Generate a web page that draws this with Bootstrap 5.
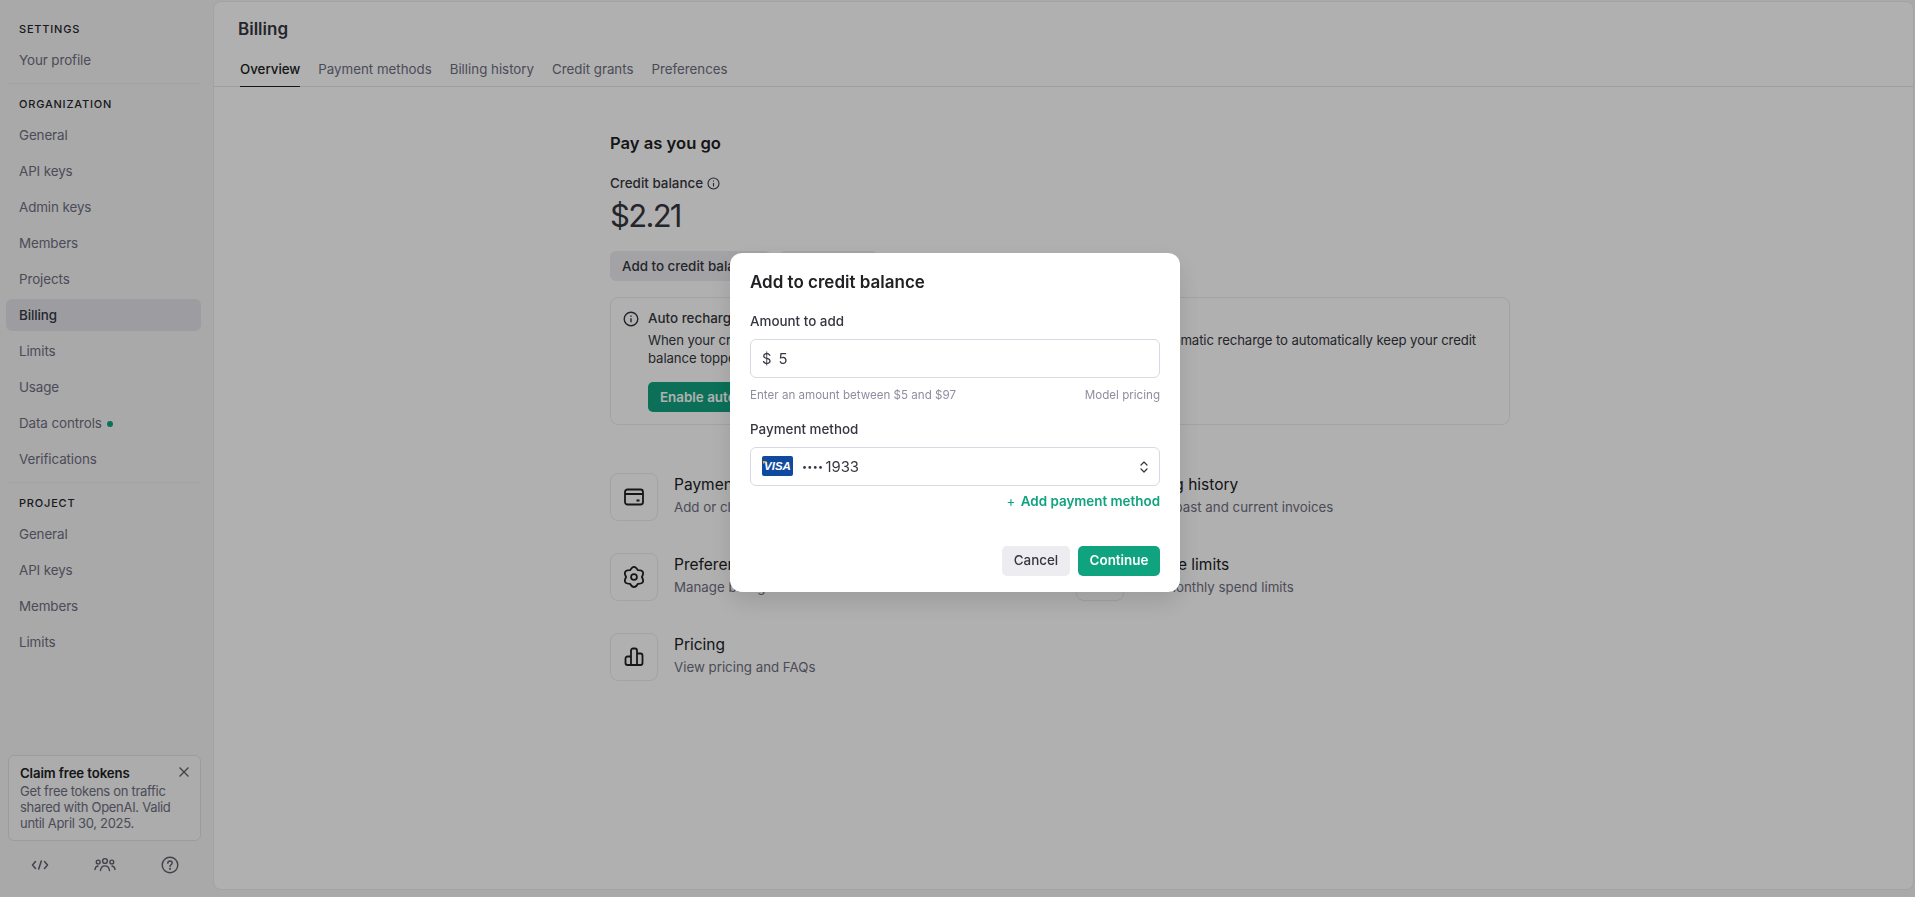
<!DOCTYPE html>
<html lang="en">

<head>
    <meta charset="UTF-8">
    <meta name="viewport" content="width=device-width, initial-scale=1.0">
    <title>Billing</title>
    <link href="https://cdn.jsdelivr.net/npm/bootstrap@5.3.3/dist/css/bootstrap.min.css" rel="stylesheet">
    <style>
        html, body { height: 100%; }

        body {
            background: #f5f5f5;
            font-family: Inter, "Liberation Sans", sans-serif;
            font-size: 14px;
            color: #202123;
            overflow: hidden;
        }

        /* sidebar */
        .side-col { width: 213px; height: 897px; padding: 0 12px 0 6px; flex-shrink: 0; }
        .side-head { font-size: 11px; font-weight: 500; letter-spacing: .8px; color: #26262b; padding-left: 13px; height: 16px; line-height: 16px; }
        .side-head.first { margin-top: 21px; }
        .side-list { margin-top: 5px; }
        .side-link { height: 36px; line-height: 32px; padding: 2px 13px; font-size: 13.4px; letter-spacing: -.1px; color: #6e6e80; display: block; text-decoration: none; border-radius: 6px; }
        .side-link.on { color: #353740; font-weight: 500; background: #e3e3ea; height: 32px; line-height: 32px; padding: 0 13px; margin: 2px 0; }
        .side-rule { border-top: 1px solid #ececf1; margin: 5px 0 12px 1px; }
        .green-dot { display: inline-block; width: 6px; height: 6px; border-radius: 50%; background: #10a37f; margin-left: 5px; vertical-align: 1px; }
        .claim-box { width: 193px; height: 86px; margin: 0 0 0 2px; background: #f9f9f9; border: 1px solid #e3e3e6; border-radius: 6px; padding: 7px 11px; font-size: 13px; letter-spacing: -.3px; line-height: 16px; color: #6e6e80; position: relative; }
        .claim-box b { display: block; font-weight: 600; color: #202123; font-size: 13.2px; letter-spacing: -.1px; line-height: 20px; }
        .claim-x { position: absolute; right: 10px; top: 10px; }
        .foot-icons { height: 56px; padding: 0 22px 8px 25px; }

        /* main panel */
        .main-panel { position: relative; flex: 1; height: 889px; margin-top: 1px; margin-right: 1px; background: #fff; border: 1px solid #ececf1; border-radius: 8px; }
        .panel-title { font-size: 17px; font-weight: 600; color: #353740; padding: 17px 0 0 24px; line-height: 20px; height: 47px; }
        .tab-row { border-bottom: 1px solid #e5e5ea; padding-left: 26px; height: 38px; gap: 18px; }
        .tab-link { font-size: 13.3px; line-height: 20px; padding-top: 10px; color: #6e6e80; text-decoration: none; }
        .tab-link.on { color: #202123; font-weight: 500; border-bottom: 1px solid #202123; height: 38px; }
        .pay-wrap { width: 900px; margin-left: 396px; padding-top: 44px; }
        .pay-head { font-size: 16.6px; font-weight: 600; line-height: 24px; color: #202123; }
        .bal-label { font-size: 13.4px; font-weight: 500; line-height: 20px; margin-top: 18px; color: #353740; }
        .bal-big { font-size: 31px; line-height: 40px; color: #353740; margin-top: 3px; letter-spacing: -1.7px; }
        .bal-btns { margin-top: 15px; }
        .soft-btn { background: #ececf1; color: #353740; border: 0; border-radius: 6px; font-size: 13.4px; font-weight: 500; height: 30px; padding: 0 12px; }
        .recharge-box { border: 1px solid #ececf1; border-radius: 8px; height: 128px; margin-top: 16px; padding: 10px 12px; gap: 9px; }
        .recharge-ico { margin-top: 3px; flex-shrink: 0; }
        .recharge-box h6 { font-size: 13.4px; font-weight: 500; line-height: 20px; margin: 0; color: #353740; }
        .recharge-box p { font-size: 13.2px; letter-spacing: -.1px; line-height: 18px; margin: 3px 0 15px; color: #353740; max-width: 850px; }
        .grn-btn { background: #10a37f; color: #fff; border: 0; border-radius: 5px; font-size: 13.4px; font-weight: 600; height: 30px; padding: 0 12px; }
        .link-grid { display: grid; grid-template-columns: 466px 1fr; row-gap: 32px; margin-top: 48px; }
        .icon-tile { width: 48px; height: 48px; border: 1px solid #ececf1; border-radius: 8px; }
        .link-name { font-size: 15.5px; line-height: 20px; color: #202123; margin-top: 2px; }
        .link-sub { font-size: 13.3px; line-height: 20px; color: #6e6e80; margin-top: 2px; }

        /* dialog */
        .dim-layer { position: fixed; inset: 0; background: rgba(0, 0, 0, .31); padding: 0 5px 53px 0; }
        .dlg { width: 450px; height: 339px; background: #fff; border-radius: 12px; padding: 19px 20px 16px; box-shadow: 0 10px 25px rgba(0, 0, 0, .12); }
        .dlg-title { font-size: 17px; font-weight: 600; line-height: 20px; color: #202123; margin: 0; }
        .dlg-label { font-size: 13.4px; font-weight: 500; color: #353740; line-height: 18px; margin: 20px 0 0; }
        .dlg-label.tight { margin-top: 17px; }
        .dlg-field { border: 1px solid #d9d9e3; border-radius: 6px; height: 39px; padding: 2px 11px 0; font-size: 14.8px; color: #353740; margin-top: 9px; }
        .dlg-field input { border: 0; outline: 0; padding: 0; width: 100%; font: inherit; color: inherit; margin-left: 7px; }
        .dlg-hint { font-size: 11.6px; line-height: 16px; color: #8e8ea0; margin-top: 9px; }
        .visa-tag { width: 31px; height: 20px; margin-top: -2px; background: #0f4a9e; border-radius: 2px; color: #fff; font: italic 700 11.5px/20px "Liberation Sans", sans-serif; text-align: center; position: relative; }
        .visa-tag::before { content: ""; position: absolute; left: 1px; top: 5px; border-left: 4px solid #f7a823; border-bottom: 3px solid transparent; }
        .mask-dots { font-size: 9px; letter-spacing: .3px; margin: 0 2px 0 9px; }
        .add-row { margin-top: 4px; }
        .add-link { font-size: 13.4px; font-weight: 600; color: #10a37f; text-decoration: none; line-height: 18px; }
        .add-plus { font-weight: 400; margin-right: 2px; }
        .grey-btn { background: #ececf1; color: #353740; border: 0; border-radius: 5px; height: 30px; width: 68px; font-size: 13.4px; font-weight: 500; padding: 0; }
        .go-btn { background: #10a37f; color: #fff; border: 0; border-radius: 5px; height: 30px; width: 82px; font-size: 13.4px; font-weight: 600; padding: 0; }
    </style>
</head>

<body>
    <div class="d-flex">
        <aside class="side-col d-flex flex-column">
            <div class="side-head first">SETTINGS</div>
            <a class="side-link side-list" href="#">Your profile</a>
            <div class="side-rule"></div>
            <div class="side-head">ORGANIZATION</div>
            <div class="side-list">
                <a class="side-link" href="#">General</a>
                <a class="side-link" href="#">API keys</a>
                <a class="side-link" href="#">Admin keys</a>
                <a class="side-link" href="#">Members</a>
                <a class="side-link" href="#">Projects</a>
                <a class="side-link on" href="#">Billing</a>
                <a class="side-link" href="#">Limits</a>
                <a class="side-link" href="#">Usage</a>
                <a class="side-link" href="#">Data controls<span class="green-dot"></span></a>
                <a class="side-link" href="#">Verifications</a>
            </div>
            <div class="side-rule"></div>
            <div class="side-head">PROJECT</div>
            <div class="side-list">
                <a class="side-link" href="#">General</a>
                <a class="side-link" href="#">API keys</a>
                <a class="side-link" href="#">Members</a>
                <a class="side-link" href="#">Limits</a>
            </div>
            <div class="claim-box mt-auto">
                <b>Claim free tokens</b>
                Get free tokens on traffic shared with OpenAI. Valid until April 30, 2025.
                <svg class="claim-x" width="12" height="12" viewBox="0 0 12 12" fill="none" stroke="#5f5f6b" stroke-width="1.3">
                    <path d="M1.5 1.5l9 9M10.5 1.5l-9 9" />
                </svg>
            </div>
            <div class="foot-icons d-flex justify-content-between align-items-center">
                <svg width="18" height="18" viewBox="0 0 18 18" fill="none" stroke="#5f5f6b" stroke-width="1.5" stroke-linecap="round" stroke-linejoin="round">
                    <path d="M4.5 5.5L1.5 9l3 3.5M13.5 5.5l3 3.5-3 3.5M10.3 5l-2.6 8" />
                </svg>
                <svg width="22" height="18" viewBox="0 0 22 18" fill="none" stroke="#5f5f6b" stroke-width="1.4" stroke-linecap="round">
                    <circle cx="11" cy="5" r="2.4" />
                    <circle cx="4.2" cy="6" r="1.9" />
                    <circle cx="17.8" cy="6" r="1.9" />
                    <path d="M6.5 14.5c.4-3 2.2-4.6 4.5-4.6s4.1 1.6 4.5 4.6M1 13.5c.2-2 1.2-3.3 3-3.5M21 13.5c-.2-2-1.2-3.3-3-3.5" />
                </svg>
                <svg width="18" height="18" viewBox="0 0 18 18" fill="none" stroke="#5f5f6b" stroke-width="1.4" stroke-linecap="round">
                    <circle cx="9" cy="9" r="7.8" />
                    <path d="M6.8 7.2c0-1.3 1-2.2 2.2-2.2s2.2.9 2.2 2.1c0 1.7-2.2 1.7-2.2 3.4" />
                    <circle cx="9" cy="12.8" r=".4" fill="#5f5f6b" />
                </svg>
            </div>
        </aside>

        <main class="main-panel">
            <div class="panel-title">Billing</div>
            <div class="tab-row d-flex">
                <a class="tab-link on" href="#">Overview</a>
                <a class="tab-link" href="#">Payment methods</a>
                <a class="tab-link" href="#">Billing history</a>
                <a class="tab-link" href="#">Credit grants</a>
                <a class="tab-link" href="#">Preferences</a>
            </div>
            <div class="pay-wrap">
                <div class="pay-head">Pay as you go</div>
                <div class="bal-label d-flex align-items-center gap-1">Credit balance
                    <svg width="13" height="13" viewBox="0 0 13 13" fill="none" stroke="#353740" stroke-width="1.1">
                        <circle cx="6.5" cy="6.5" r="5.5" />
                        <path d="M6.5 6v3.5M6.5 3.5v1" />
                    </svg>
                </div>
                <div class="bal-big">$2.21</div>
                <div class="bal-btns d-flex gap-2">
                    <button class="soft-btn">Add to credit balance</button>
                    <button class="soft-btn">Cancel plan</button>
                </div>
                <div class="recharge-box d-flex">
                    <svg class="recharge-ico" width="16" height="16" viewBox="0 0 16 16" fill="none" stroke="#353740" stroke-width="1.4">
                        <circle cx="8" cy="8" r="6.8" />
                        <path d="M8 7.3v4M8 4.5v1.2" />
                    </svg>
                    <div>
                        <h6>Auto recharge is off</h6>
                        <p>When your credit balance reaches $0, your API requests will stop working. Enable automatic recharge to automatically keep your credit balance topped up.</p>
                        <button class="grn-btn">Enable auto recharge</button>
                    </div>
                </div>
                <div class="link-grid">
                    <div class="d-flex gap-3">
                        <div class="icon-tile d-flex align-items-center justify-content-center">
                            <svg width="20" height="20" viewBox="0 0 20 20" fill="none" stroke="#202123" stroke-width="1.8">
                                <rect x="1" y="2.5" width="18" height="15" rx="2.5" />
                                <path d="M1 7h18M12.5 13.5h3" />
                            </svg>
                        </div>
                        <div>
                            <div class="link-name">Payment methods</div>
                            <div class="link-sub">Add or change payment method</div>
                        </div>
                    </div>
                    <div class="d-flex gap-3">
                        <div class="icon-tile d-flex align-items-center justify-content-center">
                            <svg width="20" height="20" viewBox="0 0 20 20" fill="none" stroke="#202123" stroke-width="1.6">
                                <rect x="3" y="3" width="14" height="14" rx="2" />
                                <path d="M6 7h8M6 10h8M6 13h5" />
                            </svg>
                        </div>
                        <div>
                            <div class="link-name">Billing history</div>
                            <div class="link-sub">View past and current invoices</div>
                        </div>
                    </div>
                    <div class="d-flex gap-3">
                        <div class="icon-tile d-flex align-items-center justify-content-center">
                            <svg width="22" height="24" viewBox="0 0 20 22" fill="none" stroke="#202123" stroke-width="1.6" stroke-linejoin="round">
                                <path d="M13.6 4.76Q10 -1.5 6.4 4.76Q-.83 4.75 2.8 11Q-.83 17.25 6.4 17.24Q10 23.5 13.6 17.24Q20.83 17.25 17.2 11Q20.83 4.75 13.6 4.76Z" />
                                <circle cx="10" cy="11" r="2.7" />
                            </svg>
                        </div>
                        <div>
                            <div class="link-name">Preferences</div>
                            <div class="link-sub">Manage billing information</div>
                        </div>
                    </div>
                    <div class="d-flex gap-3">
                        <div class="icon-tile d-flex align-items-center justify-content-center">
                            <svg width="20" height="20" viewBox="0 0 20 20" fill="none" stroke="#202123" stroke-width="1.6">
                                <path d="M10 3v14M3 6h14" />
                            </svg>
                        </div>
                        <div>
                            <div class="link-name">Usage limits</div>
                            <div class="link-sub">Set monthly spend limits</div>
                        </div>
                    </div>
                    <div class="d-flex gap-3">
                        <div class="icon-tile d-flex align-items-center justify-content-center">
                            <svg width="20" height="20" viewBox="0 0 20 20" fill="none" stroke="#202123" stroke-width="1.8" stroke-linejoin="round">
                                <path d="M7 18V3.5a2 2 0 0 1 2-2h2a2 2 0 0 1 2 2V18zM13 6.5h3.5a2 2 0 0 1 2 2V16a2 2 0 0 1-2 2H13M7 9.5H3.5a2 2 0 0 0-2 2V16a2 2 0 0 0 2 2H7" />
                            </svg>
                        </div>
                        <div>
                            <div class="link-name">Pricing</div>
                            <div class="link-sub">View pricing and FAQs</div>
                        </div>
                    </div>
                </div>
            </div>
        </main>
    </div>

    <div class="dim-layer d-flex align-items-center justify-content-center">
        <div class="dlg d-flex flex-column">
            <h5 class="dlg-title">Add to credit balance</h5>
            <label class="dlg-label">Amount to add</label>
            <div class="dlg-field d-flex align-items-center">
                <span>$</span>
                <input type="text" value="5">
            </div>
            <div class="dlg-hint d-flex justify-content-between">
                <span>Enter an amount between $5 and $97</span>
                <span>Model pricing</span>
            </div>
            <label class="dlg-label tight">Payment method</label>
            <div class="dlg-field d-flex align-items-center">
                <span class="visa-tag">VISA</span>
                <span class="mask-dots">••••</span>
                <span>1933</span>
                <svg class="ms-auto" width="8" height="12" viewBox="0 0 8 12" fill="none" stroke="#353740" stroke-width="1.2" stroke-linecap="round" stroke-linejoin="round">
                    <path d="M1 4L4 1 7 4M1 8L4 11 7 8" />
                </svg>
            </div>
            <div class="add-row text-end">
                <a class="add-link" href="#"><span class="add-plus">+</span> Add payment method</a>
            </div>
            <div class="d-flex justify-content-end gap-2 mt-auto">
                <button class="grey-btn">Cancel</button>
                <button class="go-btn">Continue</button>
            </div>
        </div>
    </div>

    <script src="https://cdn.jsdelivr.net/npm/bootstrap@5.3.3/dist/js/bootstrap.bundle.min.js"></script>
</body>

</html>
